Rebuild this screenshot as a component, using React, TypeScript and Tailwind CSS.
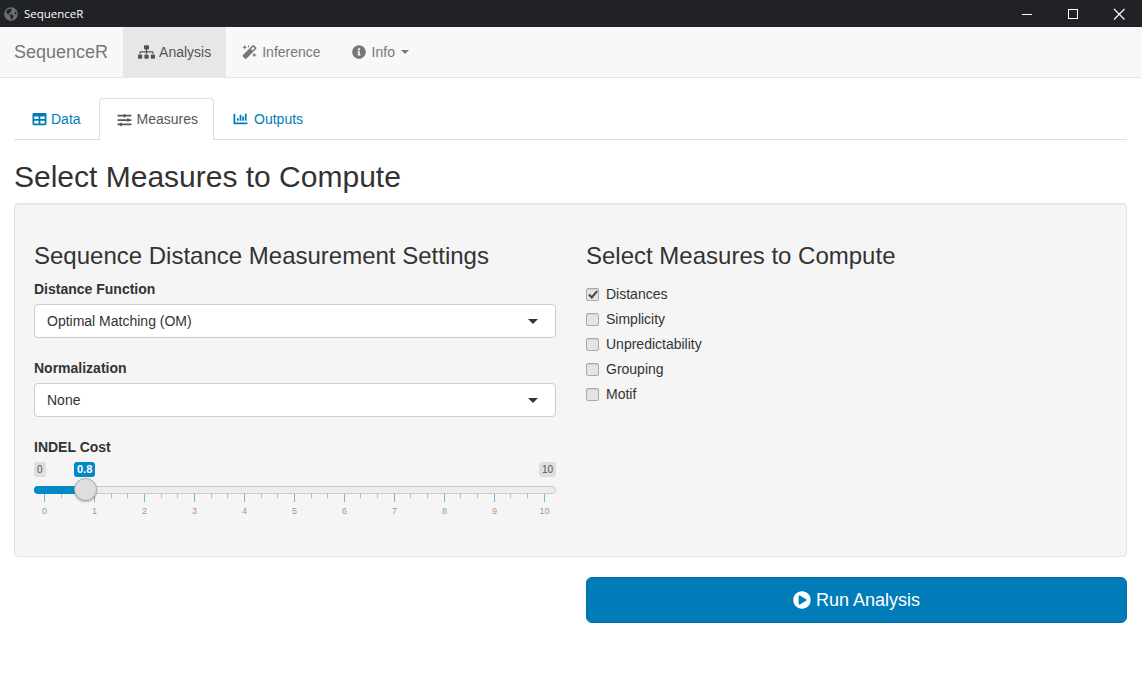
import { FaChartBar, FaGlobeAmericas, FaInfoCircle, FaMagic, FaPlayCircle, FaSitemap, FaSlidersH, FaTable } from "react-icons/fa";

const measures = [
  { label: "Distances", checked: true },
  { label: "Simplicity", checked: false },
  { label: "Unpredictability", checked: false },
  { label: "Grouping", checked: false },
  { label: "Motif", checked: false },
];

const ticks = Array.from({ length: 31 }, (_, i) => i);
const tickLabels = [0, 1, 2, 3, 4, 5, 6, 7, 8, 9, 10];

function TitleBar() {
  return (
    <div className="flex h-[27px] items-center bg-[#202225] pl-[4px] text-white">
      <FaGlobeAmericas className="h-[14px] w-[14px] text-[#6b6e72]" />
      <span className="ml-[6px] font-['Open_Sans',sans-serif] text-[11.5px]">SequenceR</span>
      <div className="ml-auto flex items-center">
        <svg width="46" height="27" viewBox="0 0 46 27">
          <path d="M22 14.5h10" stroke="#fff" strokeWidth="1" />
        </svg>
        <svg width="46" height="27" viewBox="0 0 46 27">
          <rect x="22.5" y="9.5" width="9" height="9" fill="none" stroke="#fff" strokeWidth="1" />
        </svg>
        <svg width="46" height="27" viewBox="0 0 46 27" className="mr-[4px]">
          <path d="M22 9l10.500 10.500M32.500 9L22 19.500" stroke="#fff" strokeWidth="1.100" fill="none" />
        </svg>
      </div>
    </div>
  );
}

function Navbar() {
  return (
    <nav className="flex h-[51px] items-stretch border-b border-[#e7e7e7] bg-[#f8f8f8] text-[14px] text-[#777]">
      <a className="flex items-center pl-[14px] pr-[15px] text-[18px]">SequenceR</a>
      <a className="flex items-center gap-[4px] bg-[#e7e7e7] px-[15px] text-[#555]">
        <FaSitemap className="h-[14px] w-[17px]" />
        Analysis
      </a>
      <a className="flex items-center gap-[4px] px-[15px]">
        <FaMagic className="h-[14px] w-[17px]" />
        Inference
      </a>
      <a className="flex items-center gap-[5px] pl-[16px] pr-[15px]">
        <FaInfoCircle className="h-[14px] w-[14px]" />
        <span className="ml-[1px]">Info</span>
        <span className="ml-[1px] h-0 w-0 border-x-[4.500px] border-t-[4px] border-x-transparent border-t-[#777]" />
      </a>
    </nav>
  );
}

function Tabs() {
  return (
    <div className="mt-[20px] flex h-[42px] border-b border-[#ddd] text-[14px]">
      <a className="mr-[2px] flex items-center gap-[4px] pl-[18px] pr-[16px] pt-[1px] text-[#007db8]">
        <FaTable className="h-[14px] w-[15px]" />
        Data
      </a>
      <a className="mr-[2px] flex h-[42px] items-center gap-[5px] rounded-t border border-b-0 border-[#ddd] bg-white pl-[17px] pr-[15px] text-[#555]">
        <FaSlidersH className="h-[14px] w-[15px]" />
        Measures
      </a>
      <a className="flex items-center gap-[6px] pl-[17px] pr-[15px] pt-[1px] text-[#007db8]">
        <FaChartBar className="h-[14px] w-[15px]" />
        Outputs
      </a>
    </div>
  );
}

function SelectBox({ value }: { value: string }) {
  return (
    <div className="flex h-[34px] items-center justify-between rounded border border-[#ccc] bg-white pl-[12px] pr-[17px] text-[14px] text-[#333]">
      <span>{value}</span>
      <span className="h-0 w-0 border-x-[5px] border-t-[5px] border-x-transparent border-t-[#333]" />
    </div>
  );
}

function Slider() {
  return (
    <div className="relative h-[62px]">
      {/* min, value and max tags */}
      <div className="flex h-[15px] justify-between">
        <span className="rounded-[3px] bg-[#dedede] px-[3px] text-[10px] leading-[15px] text-[#555]">0</span>
        <span className="rounded-[3px] bg-[#dedede] px-[3px] text-[10px] leading-[15px] text-[#555]">10</span>
      </div>
      <span className="absolute left-[40px] top-0 rounded-[3px] bg-[#0088c7] px-[3px] text-[11px] font-bold leading-[15px] text-white">
        0.8
      </span>

      <div className="mt-[9px] h-[8px] rounded-full border border-[#ccc] bg-[#ededed]" />
      <div className="absolute left-0 top-[24px] h-[8px] w-[45px] rounded-l-full bg-[#0088c7]" />
      <div className="absolute left-[40px] top-[16px] h-[23px] w-[23px] rounded-full border border-[#aaa] bg-[#dedede] shadow-[0_1px_2px_rgba(0,0,0,0.25)]" />

      {/* scale */}
      <div className="flex h-[8px] items-start justify-between pl-[10px] pr-[11px]">
        {ticks.map((t) => (
          <span
            key={t}
            className={t % 3 === 0 ? "h-[8px] w-px bg-[#68b8dc]" : "h-[4px] w-px bg-[#bbb]"}
          />
        ))}
      </div>
      <div className="mt-[4px] flex justify-between pl-[10px] pr-[11px]">
        {tickLabels.map((n) => (
          <span key={n} className="flex w-px justify-center text-[9px] leading-[11px] text-[#999]">
            {n}
          </span>
        ))}
      </div>
    </div>
  );
}

export default function App() {
  return (
    <div className="min-h-[674px] bg-white font-['Liberation_Sans',Arial,sans-serif] text-[#333]">
      <TitleBar />
      <Navbar />
      <div className="pl-[14px] pr-[15px]">
        <Tabs />
        <h2 className="mb-[10px] mt-[20px] text-[30px] leading-[33px]">Select Measures to Compute</h2>

        <div className="h-[354px] rounded border border-[#e3e3e3] bg-[#f5f5f5] px-[19px] pb-[19px] pt-[39px] shadow-[inset_0_1px_1px_rgba(0,0,0,0.05)]">
          <div className="grid grid-cols-[522px_1fr] gap-x-[30px]">
            <div>
              <h3 className="mb-[10px] text-[24px] leading-[26px]">Sequence Distance Measurement Settings</h3>
              <label className="mb-[5px] block text-[14px] font-bold leading-[20px]">Distance Function</label>
              <SelectBox value="Optimal Matching (OM)" />
              <label className="mb-[5px] mt-[20px] block text-[14px] font-bold leading-[20px]">Normalization</label>
              <SelectBox value="None" />
              <label className="mb-[5px] mt-[20px] block text-[14px] font-bold leading-[20px]">INDEL Cost</label>
              <Slider />
            </div>
            <div>
              <h3 className="mb-[10px] text-[24px] leading-[26px]">Select Measures to Compute</h3>
              <div className="mt-[13px] flex flex-col">
                {measures.map((m) => (
                  <label key={m.label} className="flex h-[25px] items-center text-[14px]">
                    <span className="relative mr-[7px] flex h-[13px] w-[13px] items-center justify-center rounded-[2px] border border-[#aaa] bg-[#e4e4e4] shadow-[inset_0_1px_1px_rgba(0,0,0,0.08)]">
                      {m.checked && (
                        <svg width="10" height="9" viewBox="0 0 10 9">
                          <path d="M1 4.500l2.800 3L9 1.200" fill="none" stroke="#444" strokeWidth="2" />
                        </svg>
                      )}
                    </span>
                    {m.label}
                  </label>
                ))}
              </div>
            </div>
          </div>
        </div>

        <div className="mt-[20px] grid grid-cols-[522px_1fr] gap-x-[50px]">
          <div />
          <button className="flex h-[46px] w-[541px] items-center justify-center gap-[5px] rounded-md border border-[#006f9f] bg-[#007db8] text-[18px] text-white">
            <FaPlayCircle className="h-[18px] w-[18px]" />
            Run Analysis
          </button>
        </div>
      </div>
    </div>
  );
}
